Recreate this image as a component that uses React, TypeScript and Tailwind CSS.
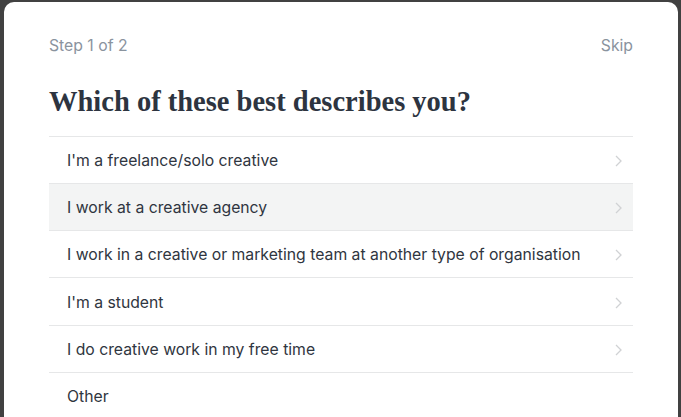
const options = [
  "I'm a freelance/solo creative",
  'I work at a creative agency',
  'I work in a creative or marketing team at another type of organisation',
  "I'm a student",
  'I do creative work in my free time',
  'Other',
]

function Chevron() {
  return (
    <svg width="7" height="12" viewBox="0 0 7 12" fill="none" stroke="#d0d2d4" strokeWidth="1.3">
      <path d="M1 1l5 5-5 5" />
    </svg>
  )
}

export default function App() {
  return (
    <div className="h-[417px] w-[681px] overflow-hidden bg-[#414141] pl-1 pr-[3px] pt-[2px]">
      <div className="h-full rounded-t-[10px] bg-white px-[45px] pt-[32px] font-['Inter',sans-serif]">
        <div className="flex items-center justify-between text-[15.75px] text-[#8a939e]">
          <span>Step 1 of 2</span>
          <span>Skip</span>
        </div>
        <h1 className="mt-[28px] mb-[18px] font-['Liberation_Serif',serif] text-[28.5px] font-bold leading-8 text-[#2d3440]">
          Which of these best describes you?
        </h1>
        <ul className="border-t border-[#e6e7e8]">
          {options.map((o, i) => (
            <li
              key={o}
              className={`flex h-[47.25px] items-center justify-between border-b border-[#e6e7e8] pt-[2px] pl-[18px] pr-[11px] text-[15.75px] text-[#2f3540] ${i === 1 ? 'bg-[#f3f4f4]' : ''}`}
            >
              <span>{o}</span>
              {i < 5 && <Chevron />}
            </li>
          ))}
        </ul>
      </div>
    </div>
  )
}
